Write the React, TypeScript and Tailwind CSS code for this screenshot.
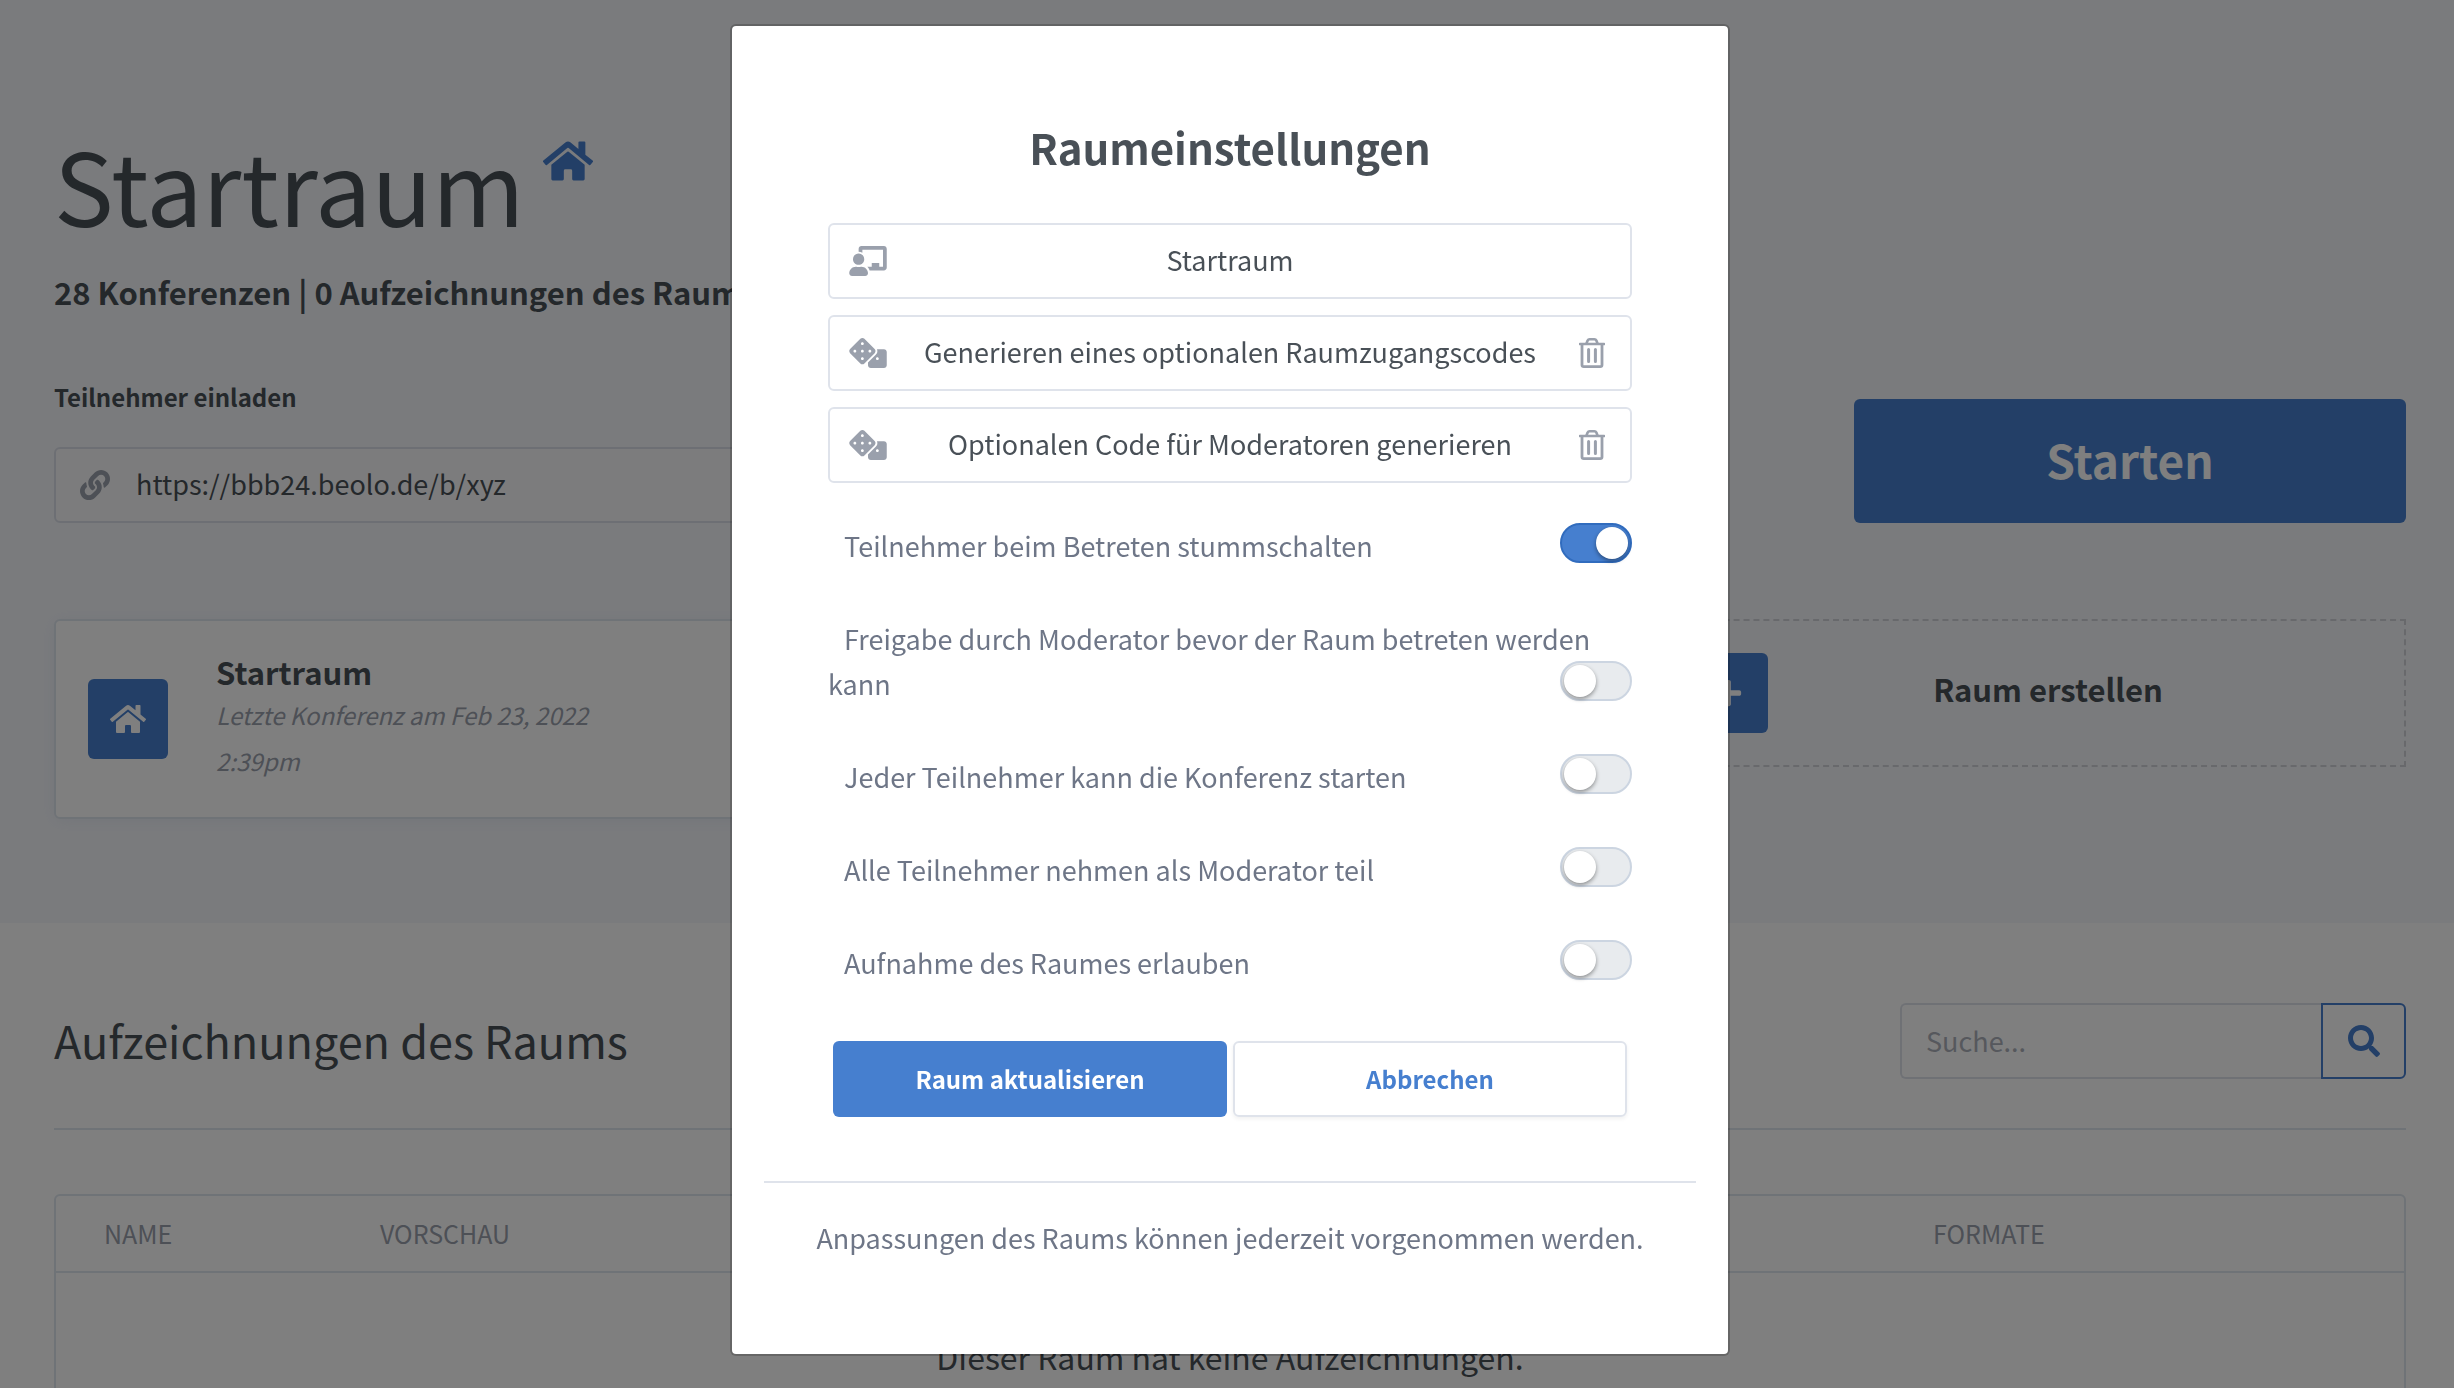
import { useState, type ReactNode } from "react";
import { FaChalkboardTeacher, FaDice, FaHome, FaLink, FaPlus, FaSearch } from "react-icons/fa";

function TrashIcon() {
  return (
    <svg viewBox="0 0 26 30" className="h-[30px] w-[26px]" fill="none" stroke="currentColor" aria-hidden="true">
      <path d="M1 6H25" strokeWidth="2.6" strokeLinecap="round" />
      <path d="M7.5 5.5 L8.6 2.6 Q9.2 1.3 10.6 1.3 H15.4 Q16.8 1.3 17.4 2.6 L18.5 5.5" strokeWidth="2.6" />
      <path d="M3 6.5V27Q3 28.6 4.8 28.6H21.2Q23 28.6 23 27V6.5" strokeWidth="2.8" />
      <path d="M9.6 11.5V23.5M16.4 11.5V23.5" strokeWidth="3" strokeLinecap="round" />
    </svg>
  );
}

function EllipsisIcon() {
  return (
    <svg viewBox="0 0 8 32" className="h-8 w-2" fill="currentColor" aria-hidden="true">
      <circle cx="4" cy="5" r="4" />
      <circle cx="4" cy="16" r="4" />
      <circle cx="4" cy="27" r="4" />
    </svg>
  );
}

function RoomHeader() {
  return (
    <section className="bg-[#f5f7fb] pb-[104px] pl-[54px] pr-12 pt-[116px]">
      <div className="flex items-start gap-[18px]">
        <h1 className="text-[100px] leading-[136px]">Startraum</h1>
        <FaHome className="mt-5 size-[50px] text-[#467fcf]" aria-hidden="true" />
      </div>
      <p className="mt-4 text-[31px] font-bold leading-[48px]">28 Konferenzen | 0 Aufzeichnungen des Raums</p>

      <div className="mt-[60px] flex items-end justify-between gap-12">
        <div className="w-1/2">
          <label htmlFor="invite" className="block text-[24px] font-bold leading-[42px]">
            Teilnehmer einladen
          </label>
          <div className="mt-[29px] flex h-[76px] items-center gap-6.5 rounded-md border-2 border-[#dbdfe8] bg-[#f9f9fa] px-6">
            <FaLink className="size-[30px] shrink-0 text-[#9aa0ac]" aria-hidden="true" />
            <input id="invite" readOnly defaultValue="https://bbb24.beolo.de/b/xyz" className="w-full pb-0.5 text-[27px]" />
          </div>
        </div>
        <button className="h-[124px] w-[23.47%] rounded-md bg-[#467fcf] pb-1 text-[46px] font-bold text-white">Starten</button>
      </div>

      <div className="mt-24 grid grid-cols-3 items-start gap-12">
        <article className="flex h-[200px] items-center rounded-md border-2 border-[#dfe6ee] bg-white px-8 shadow-[0_2px_16px_rgba(160,175,215,0.15)]">
          <div className="flex size-20 shrink-0 items-center justify-center rounded-md bg-[#467fcf] text-white">
            <FaHome className="size-9" aria-hidden="true" />
          </div>
          <div className="ml-12 flex-1 pb-0.5">
            <h2 className="text-[31px] font-bold leading-10">Startraum</h2>
            <p className="w-[440px] text-[24px] italic leading-[46px] text-[#9aa0ac]">
              Letzte Konferenz am Feb 23, 2022 2:39pm
            </p>
          </div>
          <button aria-label="Optionen" className="mr-8 text-[#6e7687]">
            <EllipsisIcon />
          </button>
        </article>
        <button className="col-start-3 flex h-[148px] items-center border-2 border-dashed border-[#d0d2d8] px-8">
          <span className="flex size-20 shrink-0 items-center justify-center rounded-md bg-[#467fcf] text-white">
            <FaPlus className="size-[30px]" aria-hidden="true" />
          </span>
          <span className="flex-1 pb-2 pr-11 text-center text-[31px] font-bold">Raum erstellen</span>
        </button>
      </div>
    </section>
  );
}

function Recordings() {
  const head = "px-0 text-left text-[25px] font-normal text-[#9aa0ac]";
  return (
    <section className="pl-[54px] pr-12 pt-20">
      <div className="flex items-center justify-between border-b-2 border-[#dfe6ee] pb-[49px]">
        <h2 className="pb-0.5 text-[45px] leading-[72px]">Aufzeichnungen des Raums</h2>
        <div className="flex h-[76px] w-[506px]">
          <input
            aria-label="Suche"
            placeholder="Suche..."
            className="w-full rounded-l-md border-2 border-r-0 border-[#dfe3eb] px-6 text-[27px] placeholder:text-[#adb1ba]"
          />
          <button
            aria-label="Suchen"
            className="flex w-[85px] shrink-0 items-center justify-center rounded-r-md border-2 border-[#467fcf] text-[#467fcf]"
          >
            <FaSearch className="size-8" aria-hidden="true" />
          </button>
        </div>
      </div>
      <div className="mt-16 rounded-md border-2 border-[#dfe6ee]">
        <table className="w-full table-fixed">
          <thead>
            <tr className="h-[76px] border-b-2 border-[#dfe6ee]">
              <th scope="col" className={`${head} w-[324px] pl-12`}>NAME</th>
              <th scope="col" className={head}>VORSCHAU</th>
              <th scope="col" className={`${head} w-[471px]`}>FORMATE</th>
            </tr>
          </thead>
          <tbody>
            <tr>
              <td colSpan={3} className="h-[166px] text-center text-[32px]">
                Dieser Raum hat keine Aufzeichnungen.
              </td>
            </tr>
          </tbody>
        </table>
      </div>
    </section>
  );
}

function Field({ icon, label, value, removable }: { icon: ReactNode; label: string; value?: string; removable?: boolean }) {
  return (
    <div className="flex h-[76px] items-center rounded-md border-2 border-[#dfe3eb] px-[19px] text-[#9aa0ac]">
      <span className="w-[38px] shrink-0">{icon}</span>
      <input
        aria-label={label}
        defaultValue={value}
        placeholder={label}
        className="min-w-0 flex-1 pb-0.5 text-center text-[27px] text-[#495057] outline-none placeholder:text-[#495057]"
      />
      {removable ? (
        <button type="button" aria-label={`${label} entfernen`} className="flex w-[38px] shrink-0 justify-center">
          <TrashIcon />
        </button>
      ) : (
        <span className="w-[38px] shrink-0" />
      )}
    </div>
  );
}

function Toggle({ label, initial = false }: { label: string; initial?: boolean }) {
  const [on, setOn] = useState(initial);
  return (
    <label className="block indent-4 text-[27px] leading-[45px] text-[#6e7687]">
      {label}
      <input type="checkbox" checked={on} onChange={() => setOn(!on)} className="peer sr-only" />
      <span className="float-right flex h-10 w-[72px] items-center rounded-full border-2 border-[#ccd5e1] bg-[#e8ebee] px-0.5 peer-checked:justify-end peer-checked:border-[#316cbe] peer-checked:bg-[#467fcf]">
        <span className="size-8 rounded-full bg-white shadow-[0_2px_4px_rgba(0,0,0,0.4)]" />
      </span>
    </label>
  );
}

function SettingsDialog() {
  return (
    <div className="fixed inset-0 flex items-start justify-center bg-black/50 pl-1.5 pt-6">
      <div
        role="dialog"
        aria-modal="true"
        aria-labelledby="dialog-title"
        className="w-[1000px] rounded-md border-2 border-black/20 bg-white bg-clip-padding px-8 pb-[94px]"
      >
        <form className="px-16 pt-[91px]" onSubmit={(e) => e.preventDefault()}>
          <h2 id="dialog-title" className="text-center text-[42px] font-bold leading-[60px] text-[#495057]">
            Raumeinstellungen
          </h2>
          <div className="mt-[46px] flex flex-col gap-4">
            <Field icon={<FaChalkboardTeacher className="h-[30px] w-[38px]" />} label="Raumname" value="Startraum" />
            <Field icon={<FaDice className="h-[30px] w-[38px]" />} label="Generieren eines optionalen Raumzugangscodes" removable />
            <Field icon={<FaDice className="h-[30px] w-[38px]" />} label="Optionalen Code für Moderatoren generieren" removable />
          </div>
          <div className="mt-10 flex flex-col gap-12">
            <Toggle label="Teilnehmer beim Betreten stummschalten" initial />
            <Toggle label="Freigabe durch Moderator bevor der Raum betreten werden kann" />
            <Toggle label="Jeder Teilnehmer kann die Konferenz starten" />
            <Toggle label="Alle Teilnehmer nehmen als Moderator teil" />
            <Toggle label="Aufnahme des Raumes erlauben" />
          </div>
          <div className="mt-14 flex justify-center gap-1.5 text-[24px] font-bold">
            <button type="submit" className="h-[76px] w-[49%] rounded-md bg-[#467fcf] text-white">
              Raum aktualisieren
            </button>
            <button
              type="button"
              className="h-[76px] w-[49%] rounded-md border-2 border-[#dfe3eb] text-[#467fcf] shadow-[0_2px_4px_rgba(0,0,0,0.06)]"
            >
              Abbrechen
            </button>
          </div>
        </form>
        <p className="mt-16 border-t-2 border-[#dfe3eb] pt-8 text-center text-[27px] leading-[45px] text-[#6e7687]">
          Anpassungen des Raums können jederzeit vorgenommen werden.
        </p>
      </div>
    </div>
  );
}

export default function App() {
  return (
    <div className="h-screen overflow-hidden bg-white font-['Noto_Sans_CJK_SC',sans-serif] text-[#495057]">
      <RoomHeader />
      <Recordings />
      <SettingsDialog />
    </div>
  );
}
